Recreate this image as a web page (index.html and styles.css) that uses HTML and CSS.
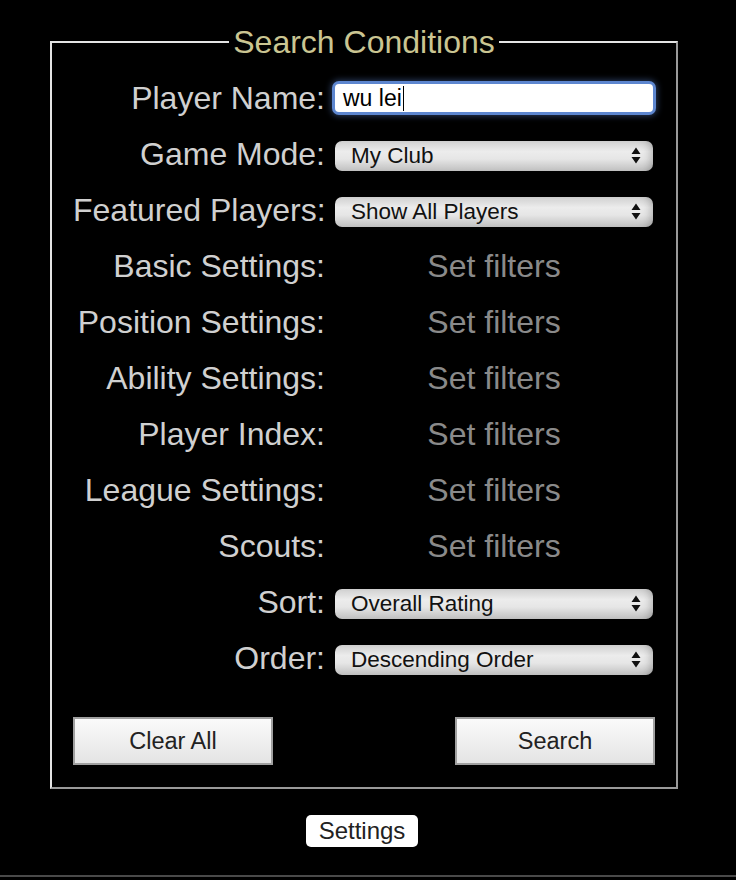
FILE: index.html
```html
<!DOCTYPE html>
<html>
  <head>
    <title>Player Search</title>
    <link rel="stylesheet" href="styles.css">
  </head>

  <body>
    <div class="page">
      <fieldset class="conditions">
        <legend>Search Conditions</legend>

        <div class="form">
          <div class="label">Player Name:</div>
          <div class="field">
            <div class="text-input">wu lei<span class="caret"></span></div>
          </div>

          <div class="label">Game Mode:</div>
          <div class="field">
            <div class="select">
              <span>My Club</span>
              <svg class="arrows" width="10" height="17" viewBox="0 0 10 17"><path d="M0.5 7 L5 0.5 L9.5 7 Z M0.5 10 L5 16.5 L9.5 10 Z" fill="#111"/></svg>
            </div>
          </div>

          <div class="label">Featured Players:</div>
          <div class="field">
            <div class="select">
              <span>Show All Players</span>
              <svg class="arrows" width="10" height="17" viewBox="0 0 10 17"><path d="M0.5 7 L5 0.5 L9.5 7 Z M0.5 10 L5 16.5 L9.5 10 Z" fill="#111"/></svg>
            </div>
          </div>

          <div class="label">Basic Settings:</div>
          <div class="field"><span class="filters">Set filters</span></div>

          <div class="label">Position Settings:</div>
          <div class="field"><span class="filters">Set filters</span></div>

          <div class="label">Ability Settings:</div>
          <div class="field"><span class="filters">Set filters</span></div>

          <div class="label">Player Index:</div>
          <div class="field"><span class="filters">Set filters</span></div>

          <div class="label">League Settings:</div>
          <div class="field"><span class="filters">Set filters</span></div>

          <div class="label">Scouts:</div>
          <div class="field"><span class="filters">Set filters</span></div>

          <div class="label">Sort:</div>
          <div class="field">
            <div class="select">
              <span>Overall Rating</span>
              <svg class="arrows" width="10" height="17" viewBox="0 0 10 17"><path d="M0.5 7 L5 0.5 L9.5 7 Z M0.5 10 L5 16.5 L9.5 10 Z" fill="#111"/></svg>
            </div>
          </div>

          <div class="label">Order:</div>
          <div class="field">
            <div class="select">
              <span>Descending Order</span>
              <svg class="arrows" width="10" height="17" viewBox="0 0 10 17"><path d="M0.5 7 L5 0.5 L9.5 7 Z M0.5 10 L5 16.5 L9.5 10 Z" fill="#111"/></svg>
            </div>
          </div>
        </div>

        <div class="actions">
          <button class="btn">Clear All</button>
          <button class="btn">Search</button>
        </div>
      </fieldset>

      <div class="footer">
        <button class="settings">Settings</button>
      </div>
    </div>

    <div class="bottom-line"></div>
  </body>
</html>
```

FILE: styles.css
```css
* {
  box-sizing: border-box;
}

body {
  margin: 0;
  background: #000;
  color: #d0d0d0;
  font-family: "Liberation Sans", Arial, Helvetica, sans-serif;
}

.page {
  width: 628px;
  margin-left: 50px;
  padding-top: 24px;
}

.conditions {
  margin: 0;
  padding: 10px 21px 22px;
  border: 2px solid;
  border-color: #e4e4e4 #9a9a9a #9a9a9a #e4e4e4;
  min-width: 0;
}

.conditions legend {
  margin: 0 auto;
  padding: 0 4px;
  font-size: 32px;
  line-height: 36px;
  color: #cac592;
}

.form {
  display: grid;
  grid-template-columns: 252px 322px;
  grid-auto-rows: 56px;
  column-gap: 8px;
}

.label {
  font-size: 32px;
  line-height: 56px;
  text-align: right;
  white-space: nowrap;
  color: #d0d0d0;
}

.field {
  display: flex;
  align-items: center;
  justify-content: center;
}

.text-input {
  width: 318px;
  height: 28px;
  background: #fff;
  border-radius: 4px;
  padding-left: 8px;
  font-size: 23px;
  line-height: 28px;
  color: #000;
  box-shadow: 0 0 0 3px #5d86cf, 0 0 6px 4px rgba(93, 134, 207, 0.45);
  display: flex;
  align-items: center;
}

.caret {
  display: inline-block;
  width: 1px;
  height: 25px;
  margin-left: 1px;
  background: #000;
}

.select {
  width: 318px;
  height: 30px;
  margin-top: 3px;
  border-radius: 7px;
  padding: 0 12px 0 16px;
  display: flex;
  align-items: center;
  justify-content: space-between;
  font-size: 22.5px;
  color: #111;
  background: linear-gradient(to bottom, #d0d0d0 0%, #ececec 35%, #e6e6e6 60%, #c0c0c0 100%);
  box-shadow: inset -10px 0 10px -8px rgba(0, 0, 0, 0.25);
}

.filters {
  font-size: 32px;
  color: #8a8a8a;
}

.actions {
  display: flex;
  justify-content: space-between;
  margin-top: 31px;
}

.btn {
  width: 200px;
  height: 48px;
  border: 2px solid #a0a0a0;
  border-radius: 0;
  background: linear-gradient(to bottom, #fafafa, #e4e4e4);
  font-family: inherit;
  font-size: 23.5px;
  color: #222;
  padding: 0;
}

.footer {
  display: flex;
  justify-content: center;
  margin-top: 26px;
  padding-right: 4px;
}

.settings {
  height: 32px;
  padding: 0 13px;
  border: none;
  border-radius: 5px;
  background: #fff;
  font-family: inherit;
  font-size: 24px;
  color: #222;
}

.bottom-line {
  margin-top: 28px;
  height: 2px;
  background: #4a4a4a;
}
```
